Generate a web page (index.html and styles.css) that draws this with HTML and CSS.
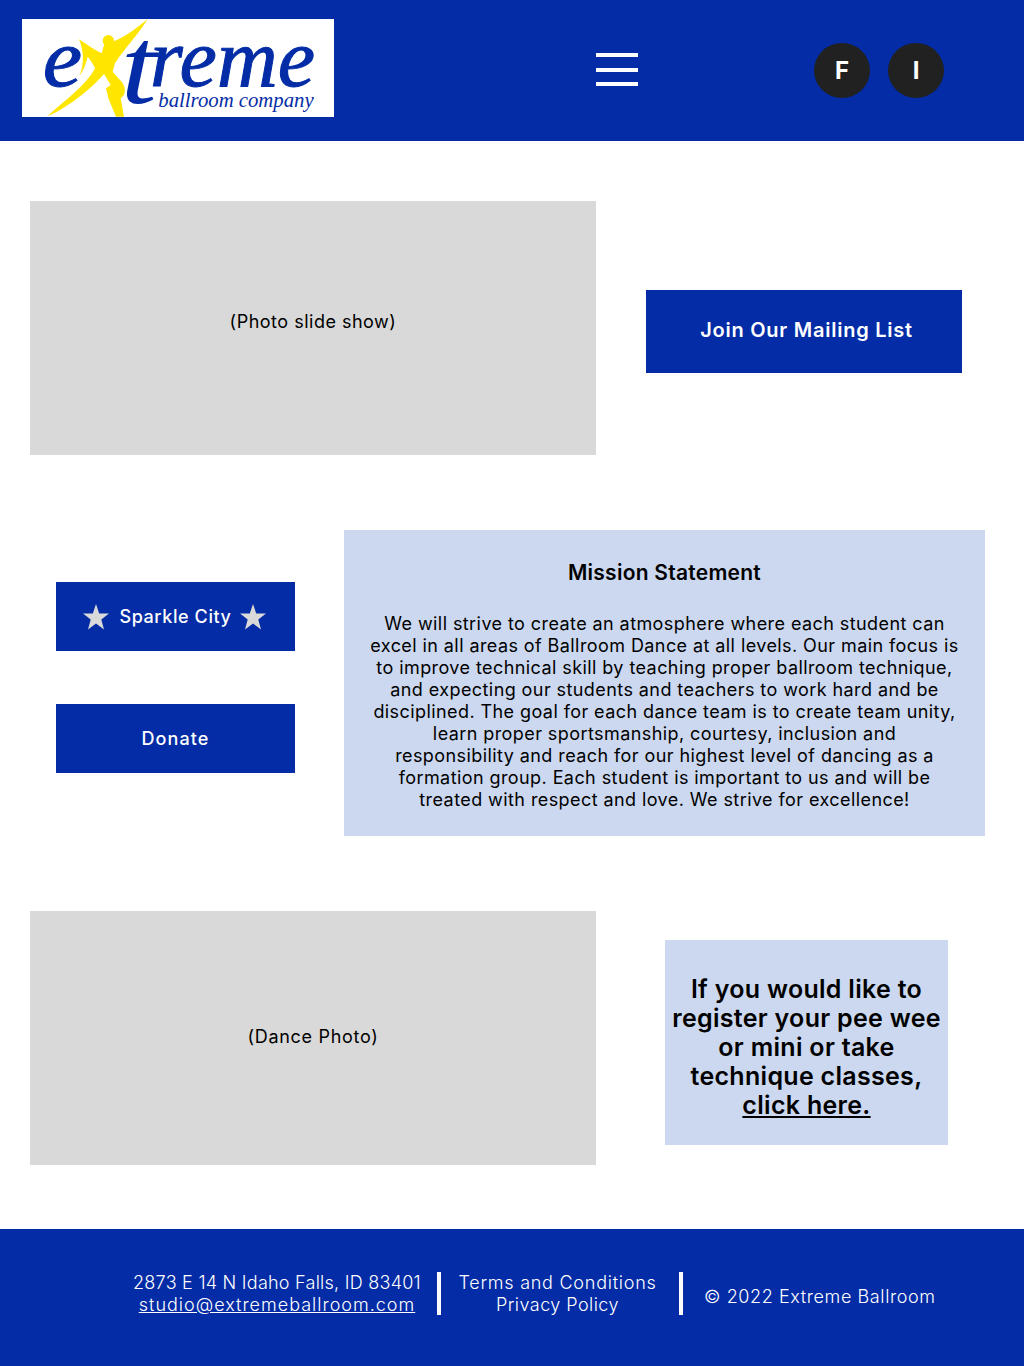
FILE: index.html
```html
<!DOCTYPE html>
<html lang="en">
<head>
<meta charset="utf-8">
<title>Extreme Ballroom Company</title>
<link rel="stylesheet" href="styles.css">
</head>
<body>
<header class="site-header">
  <a class="logo" href="#" aria-label="Extreme Ballroom Company">
    <svg class="logo-svg" viewBox="66 57 936 294" width="312" height="98">
      <rect x="66" y="57" width="936" height="294" fill="#fff"/>
      <path fill="#ffe600" d="M443 57 C410 110 370 150 345 190 L338 215 L360 240 C380 258 378 285 362 295 L372 350 L348 350 L325 295 L318 265 L332 255 L312 222 C270 270 200 325 143 348 C190 305 260 255 285 205 C275 185 265 170 262 172 C258 195 248 215 238 228 C255 190 250 150 237 118 C262 135 285 150 305 160 L312 135 L345 122 C380 108 415 80 443 57 Z"/>
      <circle cx="325" cy="122" r="17" fill="#ffe600"/>
      <text class="logo-big" x="128" y="258" textLength="118" lengthAdjust="spacingAndGlyphs">e</text>
      <text class="logo-t" x="362" y="308" textLength="108" lengthAdjust="spacingAndGlyphs">t</text>
      <text class="logo-big" x="450" y="258" textLength="495" lengthAdjust="spacingAndGlyphs">reme</text>
      <text class="logo-small" x="475" y="322" textLength="466" lengthAdjust="spacingAndGlyphs">ballroom company</text>
    </svg>
  </a>
  <button class="menu-btn" aria-label="Menu"><span></span><span></span><span></span></button>
  <nav class="social">
    <a href="#">F</a>
    <a href="#">I</a>
  </nav>
</header>

<main class="content">
  <section class="row row-photo">
    <div class="photo"><span>(Photo slide show)</span></div>
    <a class="btn btn-mail" href="#">Join Our Mailing List</a>
  </section>

  <section class="row row-mission">
    <div class="side-btns">
      <a class="btn btn-side btn-sparkle" href="#">
        <svg class="star star-left" viewBox="0 0 26 26" width="26" height="26"><path d="M13 0 L16.2 9.4 L26 9.6 L18.3 15.6 L21 25.5 L13 19.5 L5 25.5 L7.7 15.6 L0 9.6 L9.8 9.4 Z"/></svg>
        <span>Sparkle City</span>
        <svg class="star" viewBox="0 0 26 26" width="26" height="26"><path d="M13 0 L16.2 9.4 L26 9.6 L18.3 15.6 L21 25.5 L13 19.5 L5 25.5 L7.7 15.6 L0 9.6 L9.8 9.4 Z"/></svg>
      </a>
      <a class="btn btn-side btn-donate" href="#">Donate</a>
    </div>
    <article class="mission">
      <h2>Mission Statement</h2>
      <p>We will strive to create an atmosphere where each student can<br>excel in all areas of Ballroom Dance at all levels. Our main focus is<br>to improve technical skill by teaching proper ballroom technique,<br>and expecting our students and teachers to work hard and be<br>disciplined. The goal for each dance team is to create team unity,<br>learn proper sportsmanship, courtesy, inclusion and<br>responsibility and reach for our highest level of dancing as a<br>formation group. Each student is important to us and will be<br>treated with respect and love. We strive for excellence!</p>
    </article>
  </section>

  <section class="row row-photo row-last">
    <div class="photo"><span class="dance">(Dance Photo)</span></div>
    <div class="register">If you would like to register your pee wee or mini or take technique classes, <a href="#">click here.</a></div>
  </section>
</main>

<footer class="site-footer">
  <div class="foot-col foot-address">2873 E 14 N Idaho Falls, ID 83401<br><a class="foot-mail" href="#">studio@extremeballroom.com</a></div>
  <div class="foot-col foot-legal"><span class="foot-terms">Terms and Conditions</span><br><span class="foot-privacy">Privacy Policy</span></div>
  <div class="foot-col foot-copy">© 2022 Extreme Ballroom</div>
</footer>
</body>
</html>
```
FILE: styles.css
```css
* { box-sizing: border-box; }
html, body { margin: 0; padding: 0; }
body {
  width: 1024px;
  background: #fff;
  color: #000;
  font-family: Inter, "Liberation Sans", sans-serif;
  font-size: 18px;
}
a { color: inherit; }

.site-header {
  height: 141px;
  background: #032ca6;
  display: flex;
  align-items: flex-start;
  padding: 19px 0 0 22px;
}
.logo { display: block; width: 312px; height: 98px; flex: none; }
.logo-svg { display: block; overflow: visible; }
.logo-big { font-family: "Liberation Serif", serif; font-style: italic; font-size: 250px; fill: #032ca6; stroke: #032ca6; stroke-width: 3px; }
.logo-t { font-family: "Liberation Serif", serif; font-style: italic; font-size: 330px; fill: #032ca6; }
.logo-small { font-family: "Liberation Serif", serif; font-style: italic; font-size: 62px; fill: #032ca6; }

.menu-btn {
  flex: none;
  width: 42px;
  height: 33px;
  margin: 34px 0 0 262px;
  padding: 0;
  border: 0;
  background: none;
  display: flex;
  flex-direction: column;
  justify-content: space-between;
}
.menu-btn span { display: block; height: 4px; background: #fff; }

.social {
  display: flex;
  gap: 18px;
  margin: 24px 0 0 176px;
}
.social a {
  width: 56px;
  height: 55px;
  padding-bottom: 1px;
  border-radius: 50%;
  background: #212121;
  color: #fff;
  font-weight: 700;
  font-size: 24px;
  text-decoration: none;
  display: flex;
  align-items: center;
  justify-content: center;
}

.content { padding: 60px 0 64px; display: flex; flex-direction: column; gap: 75px; }
.row { display: flex; }
.row-photo { padding-left: 30px; height: 254px; align-items: flex-start; }
.photo {
  width: 566px;
  height: 254px;
  background: #d9d9d9;
  display: flex;
  justify-content: center;
  padding-top: 110px;
  font-size: 18px;
  letter-spacing: 0.5px;
}
.photo .dance { padding-top: 5px; letter-spacing: 0.7px; }

.btn {
  background: #032ca6;
  color: #fff;
  text-decoration: none;
  display: flex;
  align-items: center;
  justify-content: center;
  font-weight: 600;
}
.btn-mail { width: 316px; height: 83px; margin: 89px 0 0 50px; padding: 0 0 3px 5px; font-size: 20px; letter-spacing: 0.75px; }

.row-mission { height: 306px; padding-left: 56px; }
.side-btns { width: 239px; flex: none; padding-top: 52px; display: flex; flex-direction: column; gap: 53px; }
.btn-side { height: 69px; font-size: 18px; font-weight: 500; gap: 8px; letter-spacing: 0.6px; }
.btn-sparkle { padding-right: 2px; }
.star-left { margin-right: 2px; }
.btn-donate { letter-spacing: 1.1px; }
.star { fill: #d9d9d9; flex: none; }

.mission {
  width: 641px;
  height: 306px;
  margin-left: 49px;
  background: #ccd8ef;
  padding-top: 30px;
  text-align: center;
}
.mission h2 { margin: 0 0 27px; font-size: 21px; line-height: 26px; font-weight: 600; letter-spacing: 0.25px; }
.mission p { margin: 0; font-size: 18px; line-height: 22px; letter-spacing: 0.42px; }

.register {
  width: 283px;
  height: 205px;
  margin: 29px 0 0 69px;
  padding: 35px 2px 0;
  background: #ccd8ef;
  text-align: center;
  font-size: 25px;
  line-height: 29px;
  font-weight: 600;
  letter-spacing: 0.3px;
}

.site-footer {
  height: 137px;
  background: #032ca6;
  color: #fff;
  display: flex;
  align-items: center;
  padding: 0 0 8px 133px;
  font-size: 18px;
  line-height: 22px;
  letter-spacing: 0.25px;
  font-weight: 300;
}
.foot-col { text-align: center; white-space: nowrap; }
.foot-address { width: 288px; }
.foot-mail { letter-spacing: 1px; }
.foot-legal { width: 246px; padding-right: 5px; border-left: 4px solid #fff; border-right: 4px solid #fff; height: 43px; margin-left: 16px; }
.foot-terms { letter-spacing: 0.75px; }
.foot-privacy { letter-spacing: 0.45px; }
.foot-copy { margin-left: 21px; padding-top: 6px; letter-spacing: 0.6px; }
```
